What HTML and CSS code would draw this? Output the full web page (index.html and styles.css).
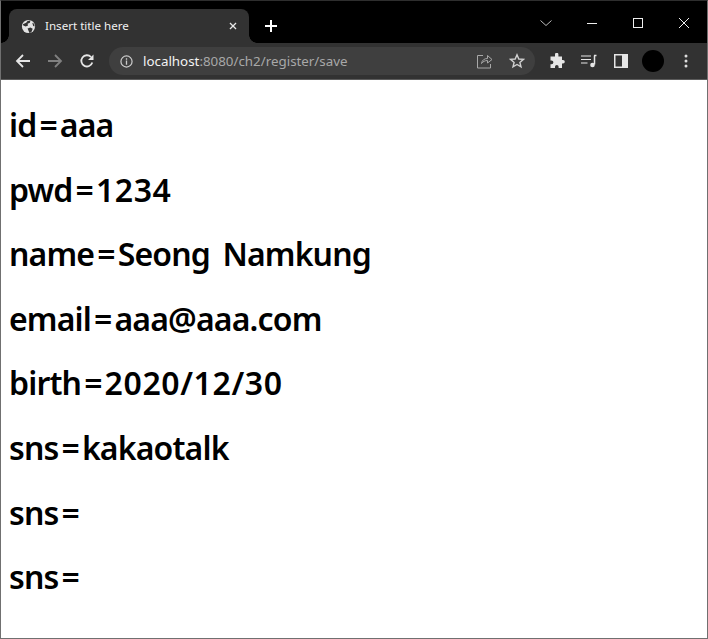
FILE: index.html
```html
<!DOCTYPE html>
<html lang="en">
<head>
<meta charset="utf-8">
<title>Insert title here</title>
<link rel="stylesheet" href="styles.css">
</head>
<body>
<div class="window">
  <header class="tabstrip">
    <div class="tab">
      <svg class="favicon" viewBox="0 0 16 16"><circle cx="8" cy="8" r="7" fill="#e3e3e3"/><path d="M2 5.500 5.500 4 7 2 10 1.500 9.500 4 7 5 7.500 7 5 8 2.500 7zM7 10l3-1 2.500 1.500-1.500 3.500-2 1-1-2.500zM12 4l2 1 .5 3-1.500-.5z" fill="#333"/></svg>
      <span class="tab-title">Insert title here</span>
      <svg class="tab-close" viewBox="0 0 10 10"><path d="M1.200 1.200 8.800 8.800M8.800 1.200 1.200 8.800" stroke="#e8e8e8" stroke-width="1.600" fill="none"/></svg>
    </div>
    <svg class="new-tab" viewBox="0 0 12 12"><path d="M6 0v12M0 6h12" stroke="#fff" stroke-width="2" fill="none"/></svg>
    <div class="win-controls">
      <svg class="win-btn" viewBox="0 0 12 12"><path d="M.5 3.500 6 8.500 11.500 3.500" stroke="#bbb" fill="none"/></svg>
      <svg class="win-btn" viewBox="0 0 12 12"><path d="M1 6.500h10" stroke="#eee" fill="none"/></svg>
      <svg class="win-btn" viewBox="0 0 12 12"><rect x="1.500" y="1.500" width="9" height="9" stroke="#eee" fill="none"/></svg>
      <svg class="win-btn" viewBox="0 0 12 12"><path d="M1 1 11 11M11 1 1 11" stroke="#eee" fill="none"/></svg>
    </div>
  </header>
  <nav class="toolbar">
    <svg class="nav-icon back" viewBox="0 0 16 16"><path d="M15 8H2M8 2 2 8l6 6" stroke="#e6e6e6" stroke-width="1.800" fill="none"/></svg>
    <svg class="nav-icon fwd" viewBox="0 0 16 16"><path d="M1 8h13M8 2l6 6-6 6" stroke="#808080" stroke-width="1.800" fill="none"/></svg>
    <svg class="nav-icon reload" viewBox="0 0 16 16"><path d="M13.300 9.500A5.600 5.600 0 1 1 12 4" stroke="#e6e6e6" stroke-width="1.800" fill="none"/><path d="M14.500 1.500v5.500H9z" fill="#e6e6e6"/></svg>
    <div class="omnibox">
      <svg class="info" viewBox="0 0 14 14"><circle cx="7" cy="7" r="6" stroke="#ccc" stroke-width="1.300" fill="none"/><path d="M7 6v4.500M7 3.500v1.500" stroke="#ccc" stroke-width="1.400"/></svg>
      <span class="url"><span class="host">localhost</span>:8080/ch2/register/save</span>
      <svg class="share" viewBox="0 0 16 16"><path d="M6 2.500H.5v12.500h13V11" stroke="#a8a8a8" fill="none"/><path d="M4.500 10.500C5 7 7.500 5.500 10.500 5.500V2.500L15 6.500 10.500 10V7.500C8 7.500 6 8.500 4.500 10.500z" stroke="#a8a8a8" fill="none"/></svg>
      <svg class="star" viewBox="0 0 16 16"><path d="M8 1.800 9.800 6l4.600.4-3.500 3 1.100 4.500L8 11.500l-4 2.400 1.100-4.500-3.500-3L6.200 6z" stroke="#d0d0d0" stroke-width="1.400" fill="none"/></svg>
    </div>
    <div class="actions">
      <svg class="act puzzle" viewBox="0 0 16 16"><path d="M6 1.500a1.700 1.700 0 0 1 3.400 0V3.500h3.600v3.400h1a1.800 1.800 0 0 1 0 3.600h-1V15H9.600v-1.200a1.800 1.800 0 0 0-3.600 0V15H1.500v-3.800h1a1.900 1.900 0 0 0 0-3.800h-1V3.500H6z" fill="#e6e6e6"/></svg>
      <svg class="act queue" viewBox="0 0 16 16"><path d="M0 3h10M0 6.500h10M0 10h6.500" stroke="#e6e6e6" stroke-width="1.200" fill="none"/><path d="M13 2.500h2.500M13.500 2.500v9" stroke="#e6e6e6" stroke-width="1.500" fill="none"/><circle cx="11.500" cy="12" r="2.300" fill="#e6e6e6"/></svg>
      <svg class="act panel" viewBox="0 0 14 14"><path d="M0 0h14v14H0z" fill="#e6e6e6"/><path d="M1.500 1.500h6.500v11H1.500z" fill="#333"/></svg>
      <span class="avatar"></span>
      <svg class="act menu" viewBox="0 0 4 14"><circle cx="2" cy="2" r="1.500" fill="#ddd"/><circle cx="2" cy="7" r="1.500" fill="#ddd"/><circle cx="2" cy="12" r="1.500" fill="#ddd"/></svg>
    </div>
  </nav>
  <main class="content">
    <h1>id<span class="eq">=</span>aaa</h1>
    <h1>pwd<span class="eq">=</span><span class="num">1234</span></h1>
    <h1>name<span class="eq">=</span>Seong Namkung</h1>
    <h1>email<span class="eq">=</span>aaa@aaa.com</h1>
    <h1>birth<span class="eq">=</span><span class="num">2020/12/30</span></h1>
    <h1>sns<span class="eq">=</span>kakaotalk</h1>
    <h1>sns<span class="eq">=</span></h1>
    <h1>sns<span class="eq">=</span></h1>
  </main>
</div>
</body>
</html>
```
FILE: styles.css
```css
* { box-sizing: border-box; }
html, body { margin: 0; height: 100%; }
body { background: #fff; overflow: hidden; }
.window {
  height: 639px;
  display: flex;
  flex-direction: column;
  border: 1px solid #707070;
  border-top-color: #2e2e2e;
  border-bottom-color: #707070;
  background: #fff;
}
.tabstrip {
  height: 42px;
  flex: none;
  background: #000;
  display: flex;
  align-items: flex-start;
  padding: 8px 0 0 8px;
}
.tab {
  width: 240px;
  height: 34px;
  background: #323232;
  border-radius: 8px 8px 0 0;
  display: flex;
  align-items: center;
  padding: 0 12px 0 12px;
  position: relative;
}
.tab::before, .tab::after {
  content: "";
  position: absolute;
  bottom: 0;
  width: 8px;
  height: 8px;
}
.tab::before { left: -8px; background: radial-gradient(circle at 0 0, #000 7.500px, #323232 8px); }
.tab::after { right: -8px; background: radial-gradient(circle at 100% 0, #000 7.500px, #323232 8px); }
.favicon { width: 15px; height: 15px; flex: none; }
.tab-title {
  margin: 0 0 1px 9px;
  flex: 1;
  color: #f0f0f0;
  font: 11.600px/16px "Noto Sans", sans-serif;
}
.tab-close { width: 8px; height: 8px; flex: none; }
.new-tab { width: 12px; height: 12px; margin: 11px 0 0 16px; flex: none; }
.win-controls {
  margin-left: auto;
  display: flex;
  gap: 34px;
  padding: 8px 17px 0 0;
}
.win-btn { width: 12px; height: 12px; display: block; }
.toolbar {
  height: 37px;
  flex: none;
  background: #323232;
  border-bottom: 1px solid #5b5b5b;
  display: flex;
  align-items: center;
  padding: 0 0 0 14px;
}
.nav-icon { width: 16px; height: 16px; flex: none; }
.fwd { margin-left: 16px; }
.reload { margin-left: 16px; }
.omnibox {
  margin-left: 14px;
  width: 426px;
  height: 28px;
  border-radius: 14px;
  background: #3f3f3f;
  display: flex;
  align-items: center;
  padding: 0 10px 0 11px;
}
.info { width: 13px; height: 13px; flex: none; }
.url {
  margin-left: 10px;
  flex: 1;
  color: #a8a8a8;
  font: 13.350px/18px "Noto Sans", sans-serif;
  white-space: nowrap;
}
.host { color: #f2f2f2; }
.share { width: 16px; height: 16px; flex: none; }
.star { width: 16px; height: 16px; flex: none; margin-left: 16px; }
.actions {
  display: flex;
  align-items: center;
  margin-left: 14px;
}
.act { flex: none; display: block; }
.puzzle { width: 16px; height: 16px; }
.queue { width: 16px; height: 16px; margin-left: 16px; }
.panel { width: 14px; height: 14px; margin-left: 17px; }
.avatar {
  width: 22px;
  height: 22px;
  border-radius: 50%;
  background: #000;
  margin-left: 14px;
  flex: none;
}
.menu { width: 4px; height: 14px; margin-left: 20px; }
.content {
  flex: 1;
  padding: 23px 8px 0;
  background: #fff;
}
h1 {
  margin: 0 0 21.600px;
  color: #000;
  font: 650 32px/43px "Noto Sans", sans-serif;
  letter-spacing: -0.85px;
  word-spacing: 5px;
  white-space: nowrap;
}
.eq { margin: 0 3px; }
.num { letter-spacing: 0.6px; }
```
